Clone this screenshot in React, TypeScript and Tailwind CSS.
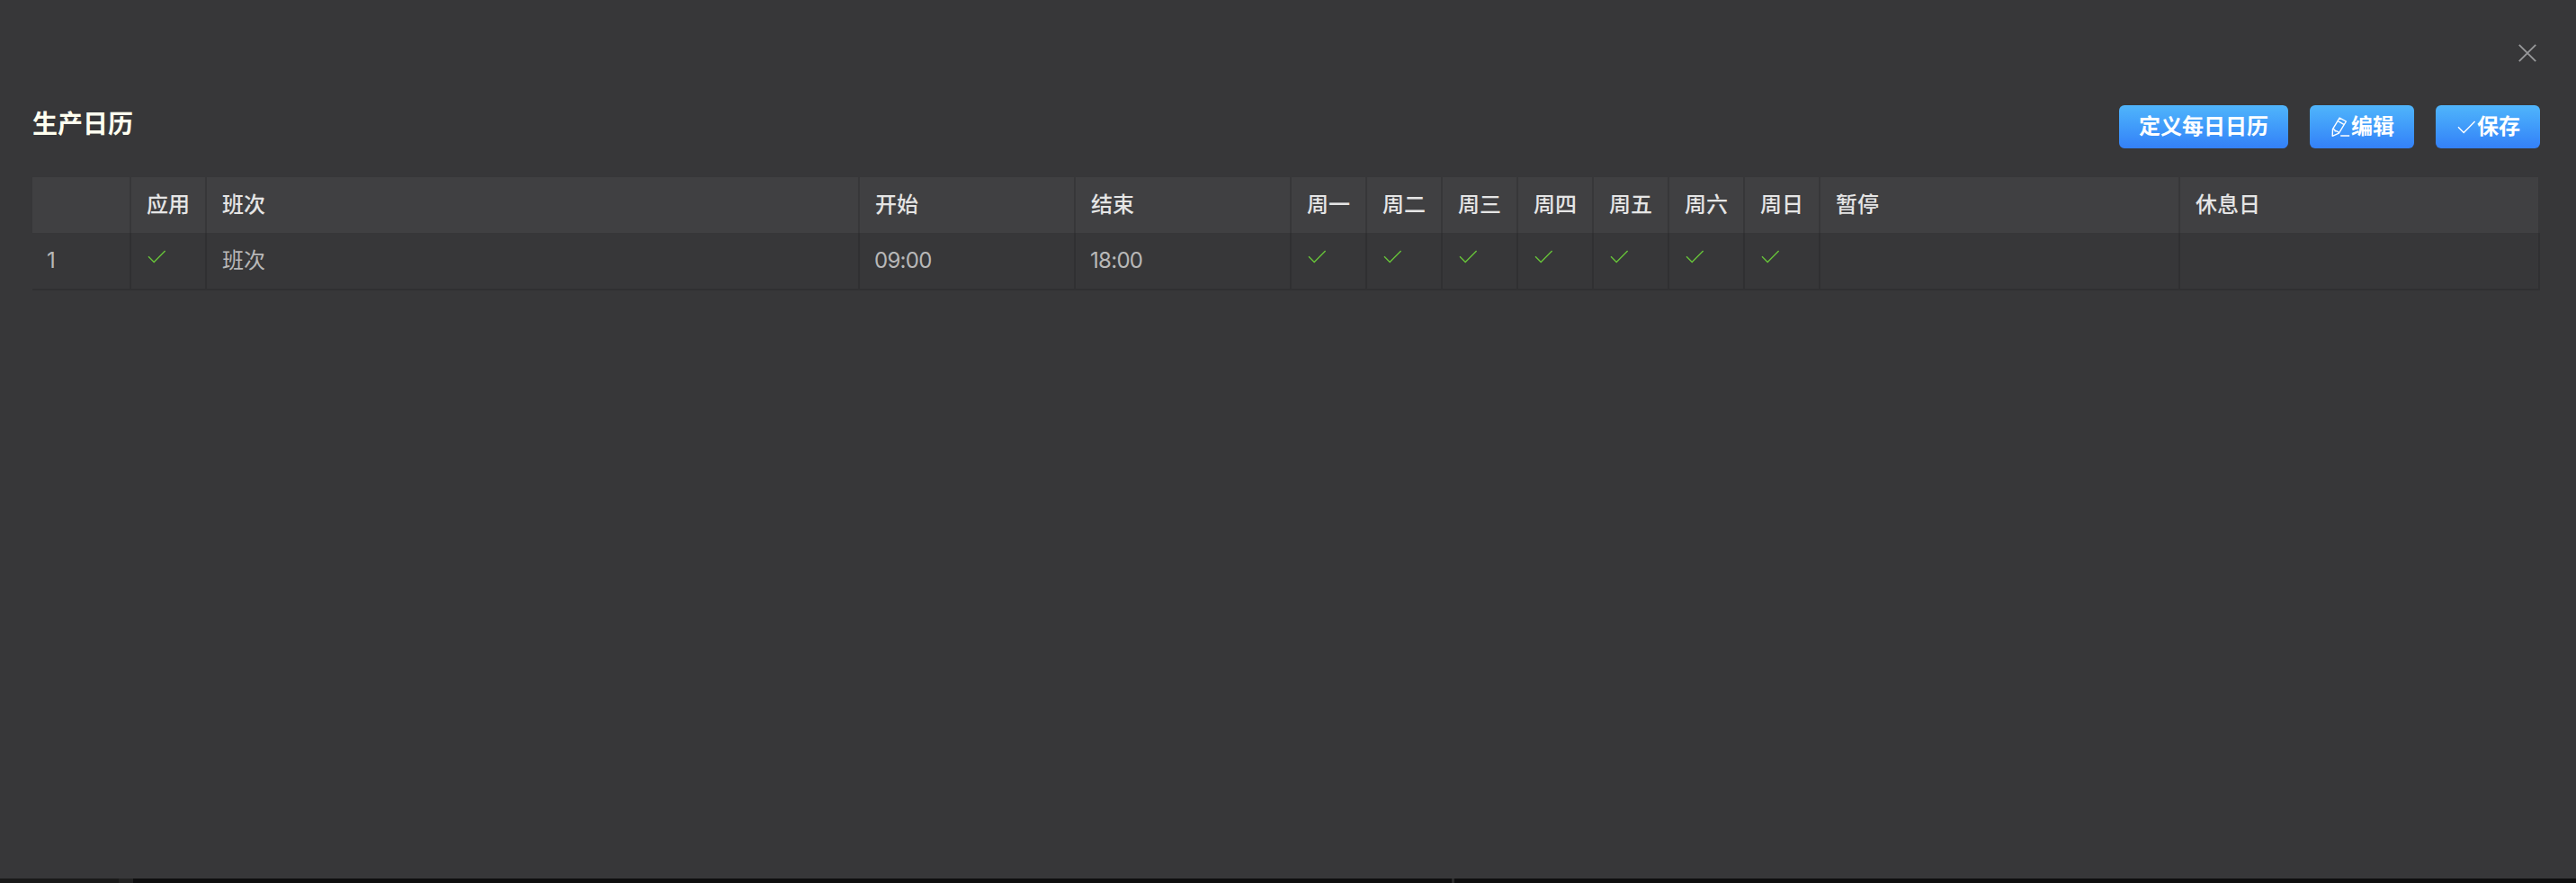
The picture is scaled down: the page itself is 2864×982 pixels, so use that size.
import type { ReactNode } from "react";

const weekdays = ["周一", "周二", "周三", "周四", "周五", "周六", "周日"];

function CheckIcon({ className = "" }: { className?: string }) {
  return (
    <svg viewBox="0 0 24 24" fill="none" stroke="currentColor" strokeWidth="1.4" className={`size-6 shrink-0 ${className}`}>
      <path d="M3 12.3 L9.2 18.4 L21.6 6.1" />
    </svg>
  );
}

function EditIcon() {
  return (
    <svg viewBox="0 0 24 24" fill="none" stroke="currentColor" strokeWidth="1.4" strokeLinejoin="round" className="size-6 shrink-0">
      <path d="M11.1 2.1 L18.4 6 L10.4 19.2 L3.2 22.3 L3.5 14.6 Z M8.9 5.4 L15.9 9.4 M3.5 14.6 C5.4 14.4 6.2 15.6 6.1 16.9 C7.8 16.4 9.8 17.2 10.2 18.9 M12.2 22 H22.2" />
    </svg>
  );
}

function Button({ children }: { children: ReactNode }) {
  return (
    <button className="flex h-12 items-center rounded-md bg-linear-to-b from-[#50b5fb] to-[#3480f8] px-[22px] text-2xl leading-none font-bold text-white">
      {children}
    </button>
  );
}

function Th({ children }: { children?: ReactNode }) {
  return (
    <th className="h-[62px] border-r-2 border-[#373739] bg-[#404042] py-0 pr-3 pl-[17px] text-left font-medium text-[#e5e5e5]">
      <div className="leading-[36px]">{children}</div>
    </th>
  );
}

function Td({ children }: { children?: ReactNode }) {
  return (
    <td className="h-16 border-r-2 border-b-2 border-[#303032] px-4 py-0 text-[#b8b8b8]">
      <div className="flex h-9 items-center">{children}</div>
    </td>
  );
}

function AppliedCheck() {
  return <CheckIcon className="-mt-2.5 text-[#67c23a]" />;
}

export default function App() {
  return (
    <div className="flex h-[982px] w-[2864px] flex-col bg-[#373739] font-[Inter,'Noto_Sans_CJK_SC',sans-serif] text-2xl">
      <header className="flex h-[117px] shrink-0 justify-end pt-[47px] pr-[42px]">
        <button aria-label="Close" className="size-6 text-[#98999b]">
          <svg viewBox="0 0 24 24" fill="none" stroke="currentColor" strokeWidth="1.8" className="size-6">
            <path d="M2.8 2.8 L21.2 21.2 M21.2 2.8 L2.8 21.2" />
          </svg>
        </button>
      </header>
      <div className="flex h-20 shrink-0 items-start justify-between pr-10 pl-9">
        <h1 className="pt-px text-[28px] leading-10 font-bold text-[#fffff0]">生产日历</h1>
        <div className="flex gap-6">
          <Button>定义每日日历</Button>
          <Button>
            <EditIcon />
            编辑
          </Button>
          <Button>
            <CheckIcon />
            保存
          </Button>
        </div>
      </div>
      <main className="grow px-9">
        <table className="w-[2788px] table-fixed border-separate border-spacing-0">
          <colgroup>
            <col className="w-[110px]" />
            <col className="w-[84px]" />
            <col className="w-[726px]" />
            <col className="w-[240px]" />
            <col className="w-[240px]" />
            {weekdays.map((day) => (
              <col key={day} className="w-[84px]" />
            ))}
            <col className="w-[400px]" />
            <col className="w-[400px]" />
          </colgroup>
          <thead>
            <tr className="whitespace-nowrap">
              <Th />
              <Th>应用</Th>
              <Th>班次</Th>
              <Th>开始</Th>
              <Th>结束</Th>
              {weekdays.map((day) => (
                <Th key={day}>{day}</Th>
              ))}
              <Th>暂停</Th>
              <Th>休息日</Th>
            </tr>
          </thead>
          <tbody>
            <tr className="whitespace-nowrap">
              <Td>1</Td>
              <Td>
                <AppliedCheck />
              </Td>
              <Td>
                <span className="pl-px">班次</span>
              </Td>
              <Td>
                <span className="tracking-[-0.7px]">09:00</span>
              </Td>
              <Td>
                <span className="tracking-[-0.7px]">18:00</span>
              </Td>
              {weekdays.map((day) => (
                <Td key={day}>
                  <AppliedCheck />
                </Td>
              ))}
              <Td />
              <Td />
            </tr>
          </tbody>
        </table>
      </main>
      <footer className="flex h-[5px] shrink-0 bg-[#0e0e0f]">
        <div className="w-[132px] bg-[#191919]" />
        <div className="w-4 bg-[#222222]" />
        <div className="ml-[1466px] w-[3px] bg-[#2a2a2b]" />
      </footer>
    </div>
  );
}
